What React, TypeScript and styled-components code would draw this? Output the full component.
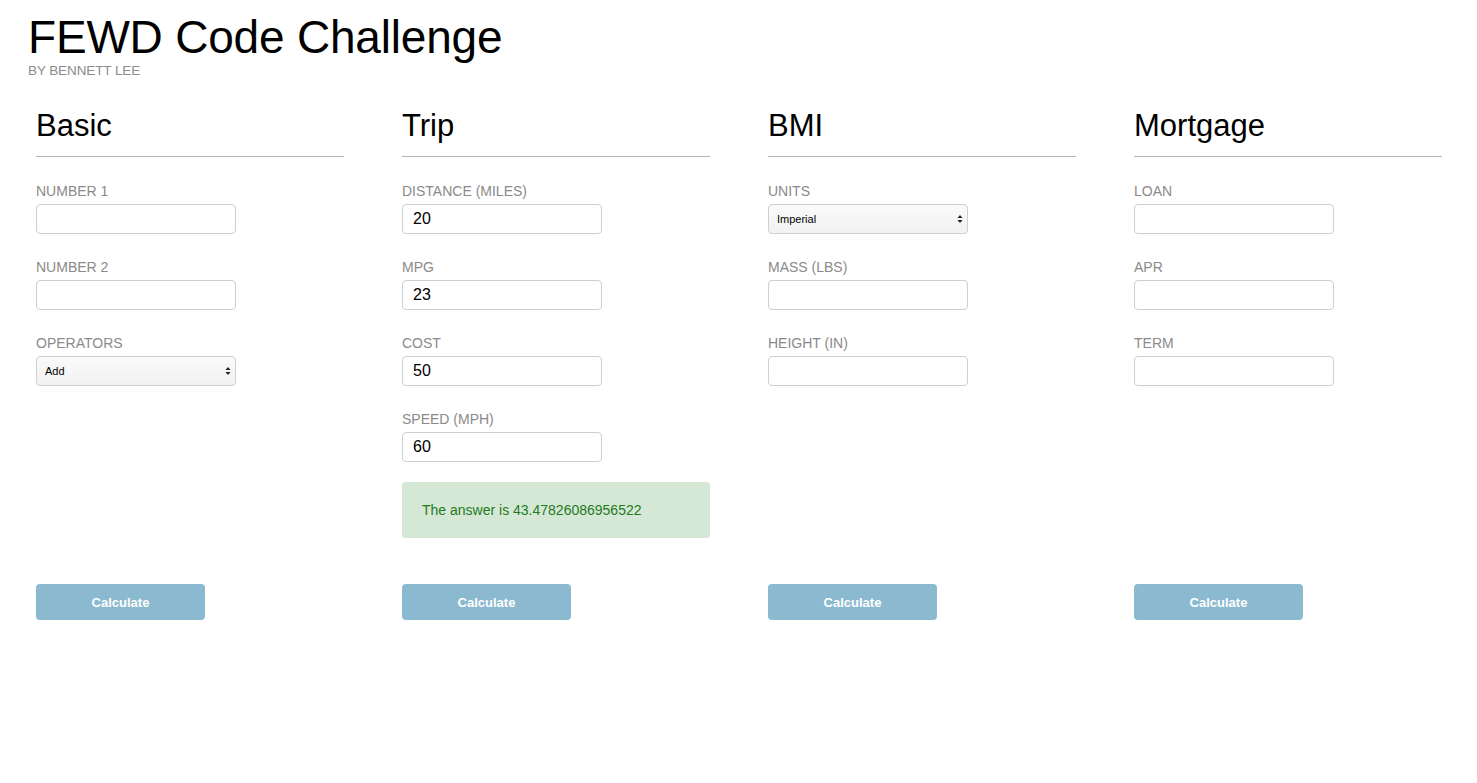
import React from "react";
import styled, { createGlobalStyle } from "styled-components";

const GlobalStyle = createGlobalStyle`
  html, body { margin: 0; padding: 0; background: #fff; }
  body { font-family: "Liberation Sans", Arial, sans-serif; color: #000; }
  * { box-sizing: border-box; }
`;

const Page = styled.div`
  padding: 11px 35px 0 28px;
`;

const Header = styled.header`
  display: flex;
  flex-direction: column;
`;

const Title = styled.h1`
  margin: 0;
  font-weight: 400;
  font-size: 46px;
  line-height: 52px;
  letter-spacing: -0.2px;
`;

const Byline = styled.div`
  font-size: 13.5px;
  line-height: 16px;
  color: #8c8c8c;
  letter-spacing: -0.1px;
`;

const Grid = styled.div`
  display: grid;
  grid-template-columns: repeat(4, 308px);
  column-gap: 58px;
  margin-top: 29px;
  padding-left: 8px;
`;

const Column = styled.section`
  display: flex;
  flex-direction: column;
`;

const Heading = styled.h2`
  margin: 0;
  font-weight: 400;
  font-size: 31px;
  line-height: 36px;
  padding-bottom: 12px;
  border-bottom: 1px solid #b3b3b3;
  margin-bottom: 26px;
`;

const Field = styled.div`
  display: flex;
  flex-direction: column;
  margin-bottom: 25px;
`;

const Label = styled.label`
  font-size: 14px;
  line-height: 16px;
  color: #8a8a8a;
  margin-bottom: 5px;
`;

const Input = styled.input`
  width: 200px;
  height: 30px;
  border: 1px solid #cfcfcf;
  border-radius: 4px;
  padding: 0 10px;
  font-family: "Liberation Sans", Arial, sans-serif;
  font-size: 16px;
  color: #000;
  background: #fff;
  outline: none;
`;

const SelectWrap = styled.div`
  position: relative;
  width: 200px;
  height: 30px;
`;

const Select = styled.select`
  appearance: none;
  -webkit-appearance: none;
  width: 200px;
  height: 30px;
  border: 1px solid #cfcfcf;
  border-radius: 4px;
  padding: 0 8px;
  font-family: "Liberation Sans", Arial, sans-serif;
  font-size: 11px;
  color: #000;
  background: linear-gradient(#fafafa, #f2f2f2);
  outline: none;
`;

const Arrows = styled.svg`
  position: absolute;
  right: 4px;
  top: 10px;
  pointer-events: none;
`;

const Answer = styled.div`
  margin-top: -5px;
  width: 308px;
  height: 56px;
  background: #d5e8d5;
  border-radius: 4px;
  color: #1f7a1f;
  font-size: 14px;
  display: flex;
  align-items: center;
  padding: 0 20px;
`;

const ButtonRow = styled.div`
  margin-top: auto;
  padding-top: 46px;
`;

const Button = styled.button`
  width: 169px;
  height: 36px;
  border: none;
  border-radius: 4px;
  background: #8bbad0;
  color: #fff;
  font-family: "Liberation Sans", Arial, sans-serif;
  font-weight: 700;
  font-size: 13px;
  cursor: pointer;
`;

type FieldDef = { label: string; value?: string; options?: string[] };

const columns: { title: string; fields: FieldDef[]; answer?: string }[] = [
  {
    title: "Basic",
    fields: [
      { label: "NUMBER 1" },
      { label: "NUMBER 2" },
      { label: "OPERATORS", options: ["Add", "Subtract", "Multiply", "Divide"] },
    ],
  },
  {
    title: "Trip",
    fields: [
      { label: "DISTANCE (MILES)", value: "20" },
      { label: "MPG", value: "23" },
      { label: "COST", value: "50" },
      { label: "SPEED (MPH)", value: "60" },
    ],
    answer: "The answer is 43.47826086956522",
  },
  {
    title: "BMI",
    fields: [
      { label: "UNITS", options: ["Imperial", "Metric"] },
      { label: "MASS (LBS)" },
      { label: "HEIGHT (IN)" },
    ],
  },
  {
    title: "Mortgage",
    fields: [{ label: "LOAN" }, { label: "APR" }, { label: "TERM" }],
  },
];

function SelectBox({ options }: { options: string[] }) {
  return (
    <SelectWrap>
      <Select defaultValue={options[0]}>
        {options.map((o) => (
          <option key={o}>{o}</option>
        ))}
      </Select>
      <Arrows width="8" height="10" viewBox="0 0 8 10">
        <path d="M4 1 L6.5 4 L1.5 4 Z" fill="#222" />
        <path d="M4 9 L6.5 6 L1.5 6 Z" fill="#222" />
      </Arrows>
    </SelectWrap>
  );
}

export default function App() {
  return (
    <>
      <GlobalStyle />
      <Page>
        <Header>
          <Title>FEWD Code Challenge</Title>
          <Byline>BY BENNETT LEE</Byline>
        </Header>
        <Grid>
          {columns.map((col) => (
            <Column key={col.title}>
              <Heading>{col.title}</Heading>
              {col.fields.map((f) => (
                <Field key={f.label}>
                  <Label>{f.label}</Label>
                  {f.options ? (
                    <SelectBox options={f.options} />
                  ) : (
                    <Input type="text" defaultValue={f.value ?? ""} />
                  )}
                </Field>
              ))}
              {col.answer && <Answer>{col.answer}</Answer>}
              <ButtonRow>
                <Button>Calculate</Button>
              </ButtonRow>
            </Column>
          ))}
        </Grid>
      </Page>
    </>
  );
}
